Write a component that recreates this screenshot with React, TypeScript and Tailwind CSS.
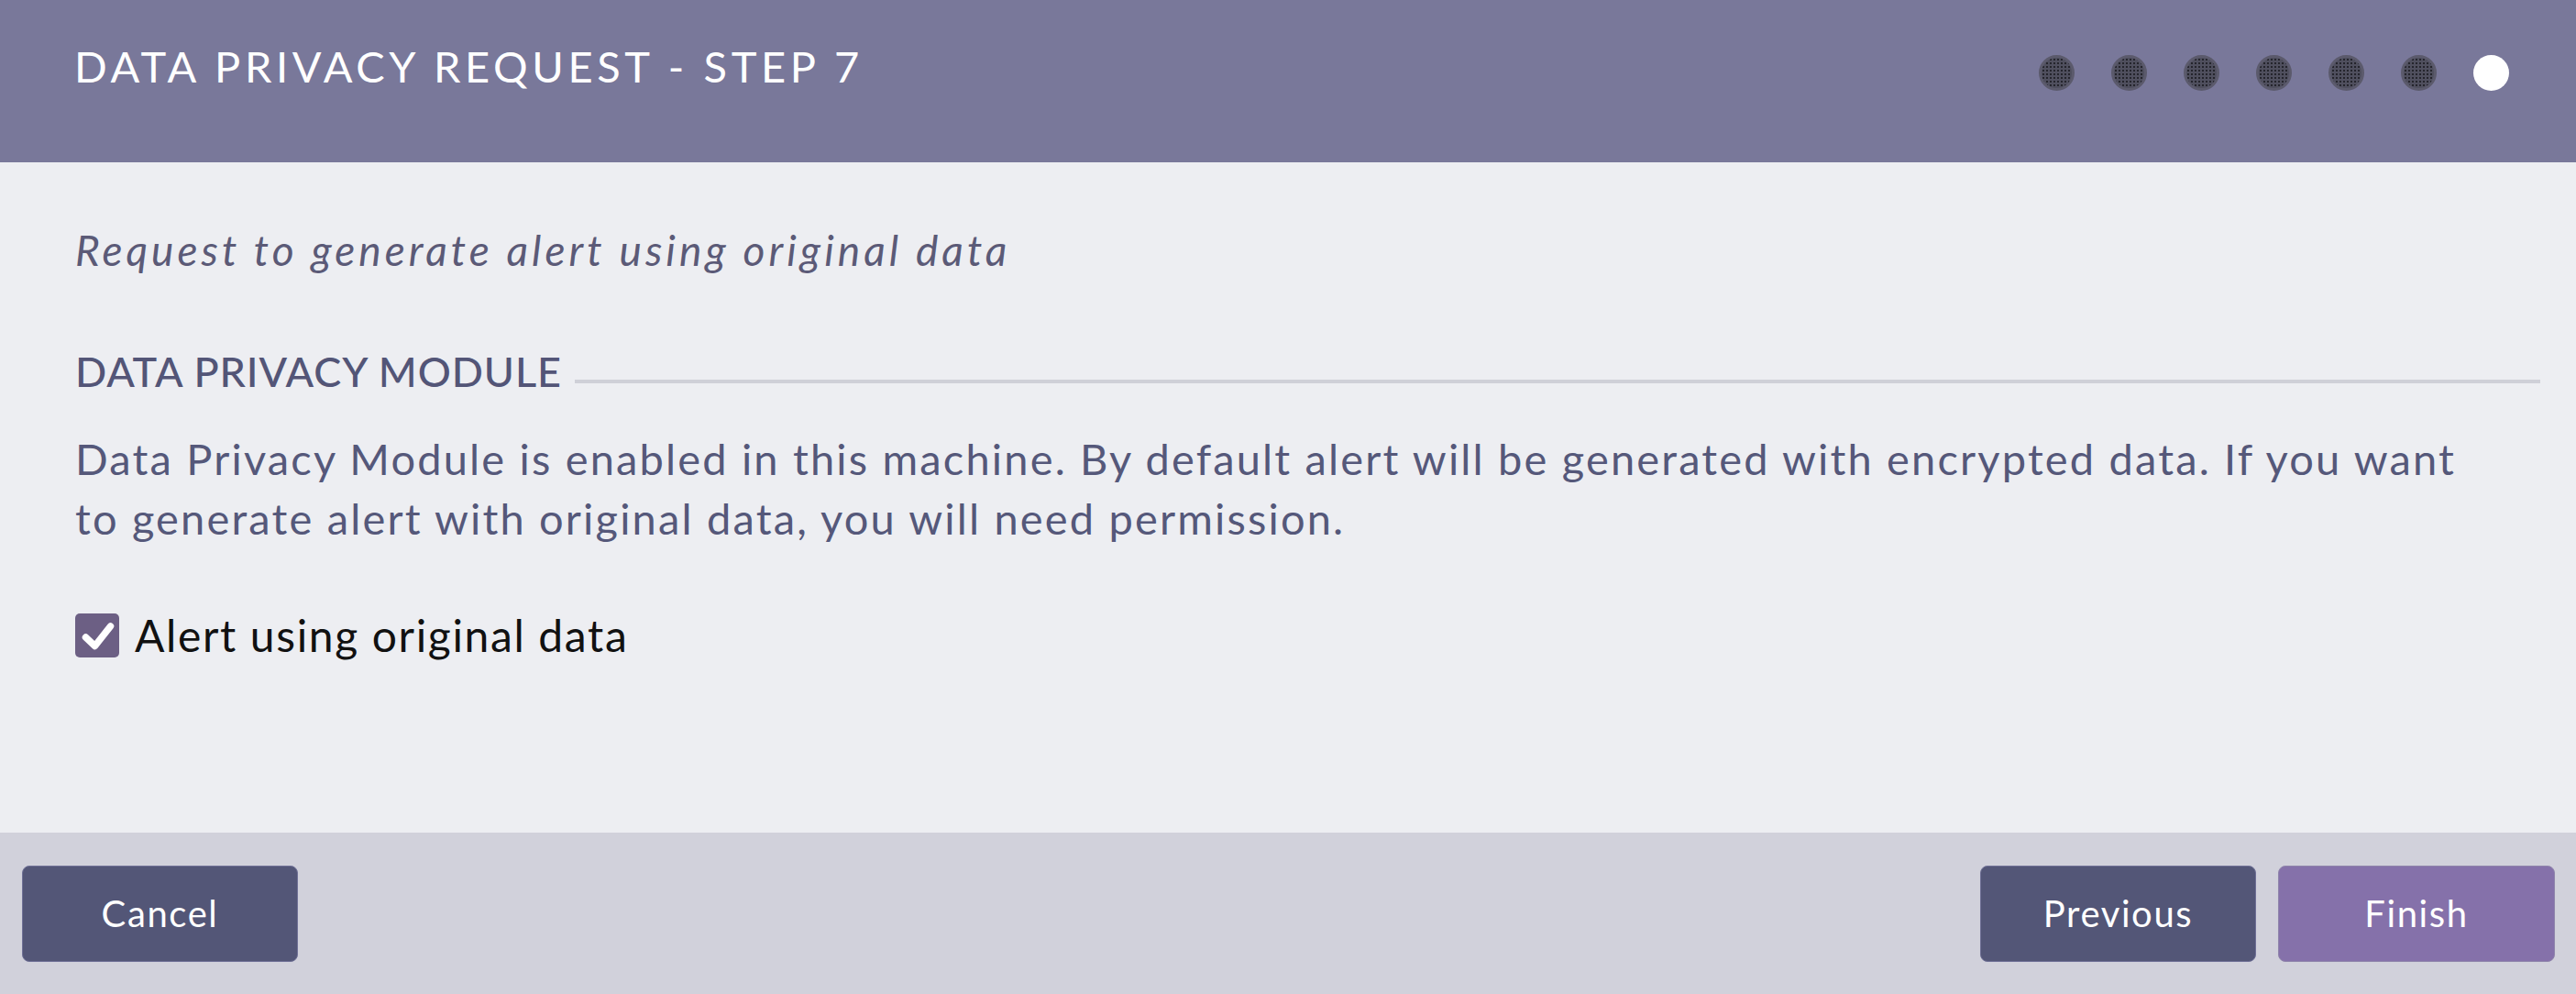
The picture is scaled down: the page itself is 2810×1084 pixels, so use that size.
import React from 'react';

const steps = [1, 2, 3, 4, 5, 6, 7];
const current = 7;

const font = { fontFamily: 'Lato, "Noto Sans", sans-serif' };

function StepDots() {
  return (
    <div className="flex items-center gap-[40px] pb-[19px]">
      {steps.map((s) => (
        <span
          key={s}
          className={
            s === current
              ? 'block w-[39px] h-[39px] rounded-full bg-white'
              : 'block w-[39px] h-[39px] rounded-full bg-[#4f4f5e] border-[3px] border-[#5b5a6c] bg-[radial-gradient(#25252d_1px,transparent_1.4px)] bg-[length:4px_4px]'
          }
        />
      ))}
    </div>
  );
}

function Button({ label, primary }: { label: string; primary?: boolean }) {
  return (
    <button
      className={
        primary
          ? 'w-[302px] h-[105px] rounded-[8px] bg-[#8571aa] border border-[#8f84ab] text-white text-[40px] tracking-[0.04em]'
          : 'w-[301px] h-[105px] rounded-[8px] bg-[#535677] border border-[#6f7096] text-white text-[40px] tracking-[0.04em]'
      }
    >
      {label}
    </button>
  );
}

export default function App() {
  return (
    <div className="w-[2810px] h-[1084px] flex flex-col bg-[#edeef2]" style={font}>
      <header className="h-[177px] shrink-0 bg-[#79789a] flex items-center justify-between pl-[81px] pr-[73px]">
        <h1 className="text-white text-[47px] leading-[1.2] tracking-[0.098em] font-normal pb-[32px]">
          DATA PRIVACY REQUEST - STEP 7
        </h1>
        <StepDots />
      </header>

      <main className="flex-1 pl-[82px] pr-[39px] pt-[68px]">
        <p className="italic text-[46px] leading-[1.2] tracking-[0.088em] text-[#5b5a77]">
          Request to generate alert using original data
        </p>

        <div className="flex items-end gap-[14px] mt-[78px]">
          <h2 className="text-[45px] leading-[1.2] font-medium tracking-[0.02em] text-[#535577] shrink-0">
            DATA PRIVACY MODULE
          </h2>
          <div className="flex-1 h-[4px] bg-[#cfd0d8] mb-[14px]" />
        </div>

        <p className="mt-[36px] text-[47px] leading-[65px] tracking-[0.046em] text-[#55587a]">
          Data Privacy Module is enabled in this machine. By default alert will be generated with encrypted data. If you want
          <br />
          to generate alert with original data, you will need permission.
        </p>

        <label className="mt-[66px] flex items-center gap-[17px] w-fit cursor-pointer">
          <span className="w-[48px] h-[48px] rounded-[5px] bg-[#6c5f84] block">
            <svg width="48" height="48" viewBox="0 0 48 48" fill="none">
              <path
                d="M11.5 26l10 9.5L38.5 14"
                stroke="white"
                strokeWidth="7.5"
                strokeLinecap="round"
                strokeLinejoin="round"
              />
            </svg>
          </span>
          <span className="text-[48px] leading-[1.2] tracking-[0.034em] text-[#111111]">Alert using original data</span>
        </label>
      </main>

      <footer className="h-[176px] shrink-0 bg-[#d1d1db] flex items-center justify-between pl-[24px] pr-[23px]">
        <Button label="Cancel" />
        <div className="flex gap-[24px]">
          <Button label="Previous" />
          <Button label="Finish" primary />
        </div>
      </footer>
    </div>
  );
}
